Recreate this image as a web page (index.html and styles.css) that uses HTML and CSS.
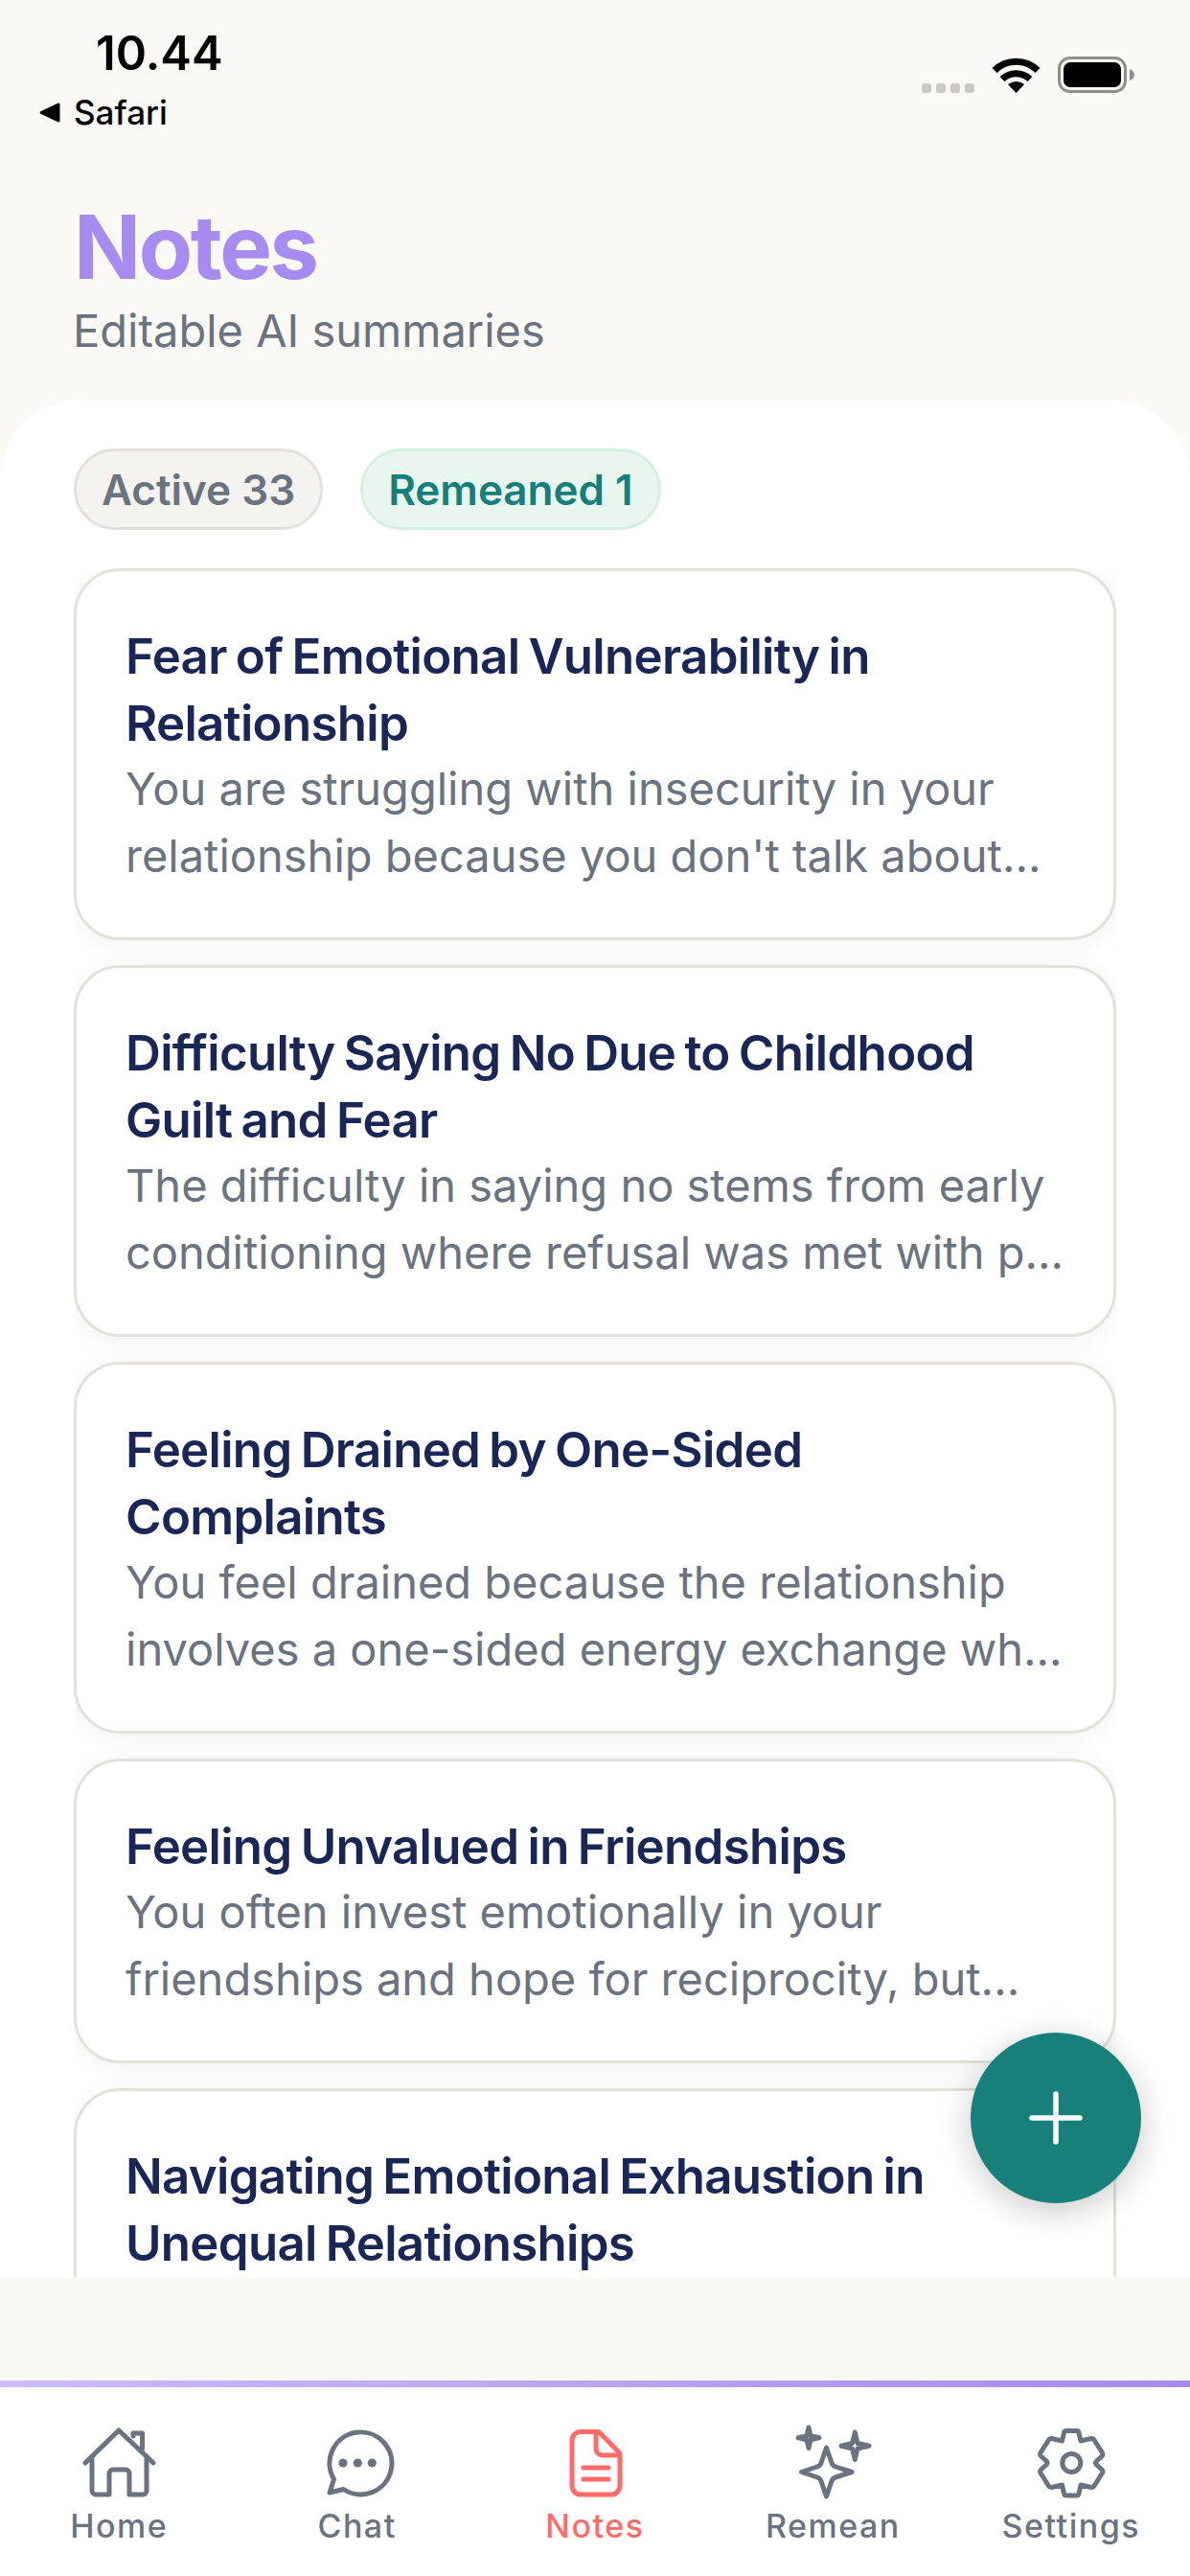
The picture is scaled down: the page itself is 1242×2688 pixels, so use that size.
FILE: index.html
```html
<!DOCTYPE html>
<html lang="en">
<head>
    <meta charset="UTF-8">
    <meta name="viewport" content="width=device-width, initial-scale=1.0">
    <title>Notes</title>
    <link rel="stylesheet" href="styles.css">
</head>
<body>
    <div class="app">
        <!-- Status bar -->
        <div class="status-bar">
            <div class="status-left">
                <div class="time">10.44</div>
                <div class="back-app">
                    <svg class="back-arrow" viewBox="0 0 22 21"><path d="M2 10.500 20 2v17z" fill="#000" stroke="#000" stroke-width="3" stroke-linejoin="round"/></svg>
                    <span>Safari</span>
                </div>
            </div>
            <div class="status-right">
                <div class="signal"><i></i><i></i><i></i><i></i></div>
                <svg class="wifi" viewBox="0 0 51 39">
                    <path d="M3 15.500a32 32 0 0 1 45 0" fill="none" stroke="#000" stroke-width="7"/>
                    <path d="M11 24.500a21 21 0 0 1 29 0" fill="none" stroke="#000" stroke-width="7"/>
                    <path d="M25.500 39 17 30q8.500-6 17 0z" fill="#000"/>
                </svg>
                <svg class="battery" viewBox="0 0 80 38">
                    <rect x="1.500" y="1.500" width="69" height="35" rx="11" fill="none" stroke="#8f8f8b" stroke-width="3"/>
                    <rect x="6" y="6" width="60" height="26" rx="7" fill="#000"/>
                    <path d="M75 13q5 2 5 6t-5 6z" fill="#8f8f8b"/>
                </svg>
            </div>
        </div>

        <!-- Header -->
        <header class="page-head">
            <h1>Notes</h1>
            <p>Editable AI summaries</p>
        </header>

        <!-- Notes sheet -->
        <main class="sheet">
            <div class="filters">
                <span class="pill pill-active">Active 33</span>
                <span class="pill pill-remeaned">Remeaned 1</span>
            </div>

            <div class="note-list">
                <article class="note">
                    <h2>Fear of Emotional Vulnerability in<br>Relationship</h2>
                    <p>You are struggling with insecurity in your<br>relationship because you don't talk about...</p>
                </article>
                <article class="note">
                    <h2>Difficulty Saying No Due to Childhood<br>Guilt and Fear</h2>
                    <p>The difficulty in saying no stems from early<br>conditioning where refusal was met with p...</p>
                </article>
                <article class="note">
                    <h2>Feeling Drained by One-Sided<br>Complaints</h2>
                    <p>You feel drained because the relationship<br>involves a one-sided energy exchange wh...</p>
                </article>
                <article class="note">
                    <h2>Feeling Unvalued in Friendships</h2>
                    <p>You often invest emotionally in your<br>friendships and hope for reciprocity, but...</p>
                </article>
                <article class="note note-cut">
                    <h2>Navigating Emotional Exhaustion in<br>Unequal Relationships</h2>
                </article>
            </div>

            <button class="fab" type="button" aria-label="New note">
                <svg viewBox="0 0 56 56"><path d="M28 3v50M3 28h50" fill="none" stroke="#fff" stroke-width="5.500" stroke-linecap="round"/></svg>
            </button>
        </main>

        <div class="spacer"></div>

        <!-- Tab bar -->
        <nav class="tabs">
            <a class="tab">
                <svg viewBox="0 0 84 84"><path d="M7 42 42 8l36 34M14 35v36a4 4 0 0 0 4 4h14V53a4 4 0 0 1 4-4h13a4 4 0 0 1 4 4v22h14a4 4 0 0 0 4-4V35M57 14v-3h9.500v16"/></svg>
                <span>Home</span>
            </a>
            <a class="tab">
                <svg viewBox="0 0 84 84"><path d="M27.500 69.500A32.500 32.500 0 1 0 17.500 59L13 73z"/><circle class="dot" cx="27" cy="42" r="4.600"/><circle class="dot" cx="42.300" cy="42" r="4.600"/><circle class="dot" cx="57.300" cy="42" r="4.600"/></svg>
                <span>Chat</span>
            </a>
            <a class="tab tab-current">
                <svg viewBox="0 0 84 84"><path d="M45 9.500H27a9 9 0 0 0-9 9V66a9 9 0 0 0 9 9h32a9 9 0 0 0 9-9V33a3 3 0 0 0-1-2L47 10.500a3 3 0 0 0-2-1zM43 10v17a7 7 0 0 0 7 7h17M30 47h26M30 59h26"/></svg>
                <span>Notes</span>
            </a>
            <a class="tab">
                <svg viewBox="0 0 84 84"><path d="M35.500 26 41 42q1 3 4 4l17 5.500L45 57q-3 1-4 4l-5.500 16L30 61q-1-3-4-4L9.500 51.500 26 46q3-1 4-4zM65.300 10l2.700 11.500 12 2.800-12 2.700-2.700 11.500L62.500 27 51 24.300l11.500-2.800zM17 5l2 8.700 9 2-9 2-2 8.800-2-8.800-9-2 9-2z"/></svg>
                <span>Remean</span>
            </a>
            <a class="tab">
                <svg viewBox="0 0 84 84"><path d="M37 8.500h10.500a2.500 2.500 0 0 1 2.500 2L52 19l11-2.500a3 3 0 0 1 3 1.500l8.500 13.500a3 3 0 0 1-.5 3.500L68.500 40a3 3 0 0 0 0 4l5.500 5a3 3 0 0 1 .5 3.500L66 66a3 3 0 0 1-3 1.500L52 65l-2 9a2.500 2.500 0 0 1-2.500 2H37a2.500 2.500 0 0 1-2.500-2l-2-9-11 2.500a3 3 0 0 1-3-1.500L10 52.500a3 3 0 0 1 .5-3.500l5.500-5a3 3 0 0 0 0-4l-5.500-5a3 3 0 0 1-.5-3.500L18.500 18a3 3 0 0 1 3-1.500l11 2.500 2-8.500a2.500 2.500 0 0 1 2.500-2z"/><circle cx="42.300" cy="42" r="9.500"/></svg>
                <span>Settings</span>
            </a>
        </nav>
    </div>
</body>
</html>
```

FILE: styles.css
```css
* {
    box-sizing: border-box;
}
body {
    margin: 0;
    background-color: #faf9f5;
    font-family: Inter, "Liberation Sans", sans-serif;
}
.app {
    display: flex;
    flex-direction: column;
    width: 1242px;
    height: 2688px;
    overflow: hidden;
}

/* status bar */
.status-bar {
    display: flex;
    justify-content: space-between;
    height: 150px;
    padding: 28px 58px 0 41px;
}
.time {
    margin-left: 59px;
    font-size: 49px;
    font-weight: 600;
    line-height: 56px;
    color: #000;
}
.back-app {
    display: flex;
    align-items: center;
    gap: 14px;
    margin-top: 10px;
    font-size: 35px;
    font-weight: 500;
    line-height: 46px;
    color: #000;
}
.back-arrow {
    width: 22px;
    height: 21px;
}
.status-right {
    display: flex;
    align-items: flex-end;
    height: 69px;
}
.signal {
    display: flex;
    gap: 5px;
    margin-right: 18px;
}
.signal i {
    width: 10px;
    height: 10px;
    border-radius: 3px;
    background-color: #c9c9c5;
}
.wifi {
    width: 51px;
    height: 39px;
    margin-right: 18px;
}
.battery {
    width: 80px;
    height: 38px;
}

/* header */
.page-head {
    height: 267px;
    padding: 53px 0 0 76px;
}
.page-head h1 {
    margin: 0 0 0 1px;
    font-size: 92px;
    font-weight: 700;
    line-height: 110px;
    letter-spacing: -2.400px;
    color: #a78bf0;
}
.page-head p {
    margin: 0;
    font-size: 47px;
    line-height: 64px;
    color: #6b7280;
}

/* sheet with notes */
.sheet {
    position: relative;
    display: flex;
    flex-direction: column;
    height: 1959px;
    padding-top: 51px;
    border-radius: 85px 85px 0 0;
    background-color: #fff;
    overflow: hidden;
}
.filters {
    display: flex;
    gap: 39px;
    margin: 0 0 40px 77px;
}
.pill {
    display: flex;
    align-items: center;
    height: 85px;
    padding: 0 26px;
    border: 3px solid;
    border-radius: 43px;
    font-size: 44px;
    font-weight: 600;
}
.pill-active {
    border-color: #e2e0da;
    background-color: #f5f3ef;
    color: #6b7280;
}
.pill-remeaned {
    border-color: #d3efe2;
    background-color: #e9f6f0;
    color: #167f7a;
}
.note-list {
    display: flex;
    flex-direction: column;
    flex: 1;
    gap: 26px;
    margin: 0 77px;
    overflow: hidden;
}
.note {
    flex-shrink: 0;
    padding: 54px 50px 50px 51px;
    border: 3px solid #e3e1db;
    border-radius: 48px;
    background-color: #fff;
    box-shadow: 0 4px 30px rgba(0, 0, 0, 0.06);
}
.note-cut {
    height: 388px;
}
.note h2 {
    margin: 0;
    font-size: 51px;
    font-weight: 600;
    line-height: 70px;
    letter-spacing: -0.700px;
    word-spacing: -3px;
    white-space: nowrap;
    color: #1a2756;
}
.note p {
    margin: -2px 0 0;
    font-size: 47px;
    line-height: 70px;
    white-space: nowrap;
    color: #6b7280;
}
.fab {
    position: absolute;
    right: 51px;
    bottom: 77px;
    display: flex;
    align-items: center;
    justify-content: center;
    width: 178px;
    height: 178px;
    padding: 0;
    border: none;
    border-radius: 50%;
    background-color: #17807b;
    box-shadow: 0 8px 36px rgba(0, 0, 0, 0.22);
}
.fab svg {
    width: 56px;
    height: 56px;
}

.spacer {
    height: 108px;
    background-color: #f9f8f4;
}

/* tab bar */
.tabs {
    display: grid;
    grid-template-columns: repeat(5, 1fr);
    flex: 1;
    padding-top: 37px;
    border-top: 7px solid;
    border-image: linear-gradient(90deg, #cbbcfc, #a78bea) 1;
    background-color: #fff;
}
.tab {
    display: flex;
    flex-direction: column;
    align-items: center;
    font-size: 34px;
    font-weight: 500;
    line-height: 40px;
    letter-spacing: 1.500px;
    color: #6b7280;
}
.tab svg {
    width: 84px;
    height: 84px;
    margin-bottom: 4px;
    fill: none;
    stroke: currentColor;
    stroke-width: 5;
    stroke-linecap: round;
    stroke-linejoin: round;
}
.tab .dot {
    fill: currentColor;
    stroke: none;
}
.tab-current {
    color: #ff6b6b;
}
```
